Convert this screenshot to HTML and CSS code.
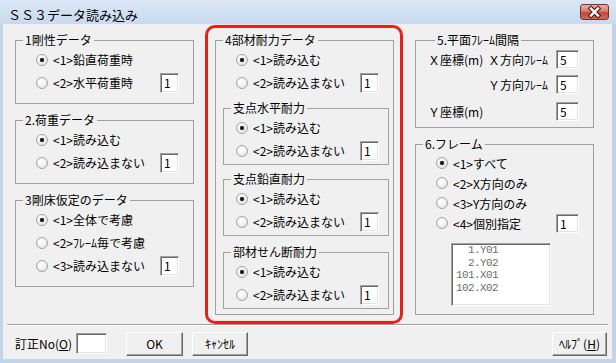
FILE: index.html
```html
<!DOCTYPE html>
<html lang="ja">
<head>
    <meta charset="UTF-8">
    <meta name="viewport" content="width=device-width, initial-scale=1.0">
    <title>ＳＳ３データ読み込み</title>
    <link rel="stylesheet" href="styles.css">
</head>
<body>

<div class="window">
    <div class="titlebar">
        <span class="title">ＳＳ３データ読み込み</span>
        <span class="close-btn">
            <svg width="27" height="14" viewBox="0 0 27 14">
                <path d="M10 3.5 L17 10.5 M17 3.5 L10 10.5" stroke="#5a1e19" stroke-width="4.6" stroke-linecap="square"/>
                <path d="M10 3.5 L17 10.5 M17 3.5 L10 10.5" stroke="#fff" stroke-width="2.4" stroke-linecap="square"/>
            </svg>
        </span>
    </div>

    <div class="client">
        <div class="panels">
            <!-- 左列 -->
            <div class="col">
                <fieldset class="group">
                    <legend>1剛性データ</legend>
                    <div class="row"><span class="radio on"></span>&lt;1&gt;鉛直荷重時</div>
                    <div class="row"><span class="radio"></span>&lt;2&gt;水平荷重時<span class="num">1</span></div>
                </fieldset>
                <fieldset class="group">
                    <legend>2.荷重データ</legend>
                    <div class="row"><span class="radio on"></span>&lt;1&gt;読み込む</div>
                    <div class="row"><span class="radio"></span>&lt;2&gt;読み込まない<span class="num">1</span></div>
                </fieldset>
                <fieldset class="group">
                    <legend>3剛床仮定のデータ</legend>
                    <div class="row"><span class="radio on"></span>&lt;1&gt;全体で考慮</div>
                    <div class="row"><span class="radio"></span>&lt;2&gt;ﾌﾚｰﾑ毎で考慮</div>
                    <div class="row"><span class="radio"></span>&lt;3&gt;読み込まない<span class="num">1</span></div>
                </fieldset>
            </div>

            <!-- 中央列 -->
            <div class="col">
                <fieldset class="group big">
                    <legend>4部材耐力データ</legend>
                    <div class="row"><span class="radio on"></span>&lt;1&gt;読み込む</div>
                    <div class="row"><span class="radio"></span>&lt;2&gt;読み込まない<span class="num">1</span></div>

                    <fieldset class="group sub">
                        <legend>支点水平耐力</legend>
                        <div class="row"><span class="radio on"></span>&lt;1&gt;読み込む</div>
                        <div class="row"><span class="radio"></span>&lt;2&gt;読み込まない<span class="num">1</span></div>
                    </fieldset>
                    <fieldset class="group sub">
                        <legend>支点鉛直耐力</legend>
                        <div class="row"><span class="radio on"></span>&lt;1&gt;読み込む</div>
                        <div class="row"><span class="radio"></span>&lt;2&gt;読み込まない<span class="num">1</span></div>
                    </fieldset>
                    <fieldset class="group sub last">
                        <legend>部材せん断耐力</legend>
                        <div class="row"><span class="radio on"></span>&lt;1&gt;読み込む</div>
                        <div class="row"><span class="radio"></span>&lt;2&gt;読み込まない<span class="num">1</span></div>
                    </fieldset>
                </fieldset>
            </div>

            <!-- 右列 -->
            <div class="col">
                <fieldset class="group spans">
                    <legend>5.平面ﾌﾚｰﾑ間隔</legend>
                    <div class="span-grid">
                        <span class="g-label">Ｘ座標(m)</span>
                        <span class="g-sub">Ｘ方向ﾌﾚｰﾑ</span>
                        <span class="num wide">5</span>
                        <span></span>
                        <span class="g-sub">Ｙ方向ﾌﾚｰﾑ</span>
                        <span class="num wide">5</span>
                        <span class="g-label">Ｙ座標(m)</span>
                        <span></span>
                        <span class="num wide">5</span>
                    </div>
                </fieldset>
                <fieldset class="group frames">
                    <legend>6.フレーム</legend>
                    <div class="row short"><span class="radio on"></span>&lt;1&gt;すべて</div>
                    <div class="row short"><span class="radio"></span>&lt;2&gt;X方向のみ</div>
                    <div class="row short"><span class="radio"></span>&lt;3&gt;Y方向のみ</div>
                    <div class="row short"><span class="radio"></span>&lt;4&gt;個別指定<span class="num wide">1</span></div>
                    <div class="listbox">  1.Y01
  2.Y02
101.X01
102.X02</div>
                </fieldset>
            </div>
        </div>

        <div class="separator"></div>

        <div class="footer">
            <span class="fix-label">訂正No(<u>O</u>)</span>
            <span class="num fix-input"></span>
            <span class="btn ok">OK</span>
            <span class="btn cancel">ｷｬﾝｾﾙ</span>
            <span class="btn help">ﾍﾙﾌﾟ(<u>H</u>)</span>
        </div>
    </div>

    <div class="highlight"></div>
</div>

</body>
</html>
```

FILE: styles.css
```css
/* ダイアログ全体 */
* {
    box-sizing: border-box;
}
body {
    margin: 0;
    font-family: "Noto Sans CJK JP", "Noto Sans", sans-serif;
    font-size: 12px;
    color: #000;
}
.window {
    position: relative;
    width: 616px;
    height: 363px;
    background: #c2d5eb;
    display: flex;
    flex-direction: column;
}
.titlebar {
    height: 24px;
    flex: none;
    display: flex;
    justify-content: space-between;
    align-items: flex-start;
    padding-left: 8px;
    background: linear-gradient(#dbe7f5, #c8daee);
}
.title {
    margin-top: 7px;
    font-size: 13px;
    line-height: 16px;
}
.close-btn {
    margin: 4px 7px 0 0;
    width: 29px;
    height: 16px;
    border: 1px solid #7a3029;
    border-radius: 3px;
    background: linear-gradient(#eab2a9, #d77a6e 45%, #c3473b 55%, #d0685c);
    display: flex;
    align-items: center;
    justify-content: center;
}
.client {
    flex: 1;
    margin: 0 4px 4px 3px;
    background: #f0f0f0;
    display: flex;
    flex-direction: column;
}
.panels {
    height: 300px;
    flex: none;
    display: flex;
    gap: 21px;
    padding: 9px 0 0 12px;
}
.col {
    width: 179px;
    display: flex;
    flex-direction: column;
    gap: 9px;
}

/* グループボックス */
.group {
    margin: 0;
    padding: 1px 0 9px;
    border: 1px solid #a0a0a0;
    min-width: 0;
}
.group legend {
    margin-left: 7px;
    padding: 0 2px;
    line-height: 14px;
}
.group.big {
    padding-bottom: 5px;
}
.group.sub {
    width: 166px;
    margin: 7px 0 0 7px;
    padding-bottom: 2px;
}
.group.sub.last {
    margin-top: 9px;
}
.group.spans {
    padding: 3px 14px 6px 12px;
}
.group.frames {
    padding: 2px 0 8px;
}

.row {
    display: flex;
    align-items: center;
    height: 23px;
    padding: 0 14px 0 20px;
    white-space: nowrap;
}
.sub .row {
    padding: 0 9px 0 12px;
}
.row.short {
    height: 20px;
}

/* ラジオボタン */
.radio {
    flex: none;
    width: 12px;
    height: 12px;
    margin-right: 5px;
    border-radius: 50%;
    border: 1px solid #a2a2a2;
    background: radial-gradient(circle at 40% 35%, #fff 0, #f3f3f3 45%, #d9d9d9 100%);
    display: flex;
    align-items: center;
    justify-content: center;
}
.radio.on::after {
    content: "";
    width: 4px;
    height: 4px;
    border-radius: 50%;
    background: #1a1a1a;
    box-shadow: 0 0 1px #444;
}

/* 数値入力欄 */
.num {
    margin-left: auto;
    width: 19px;
    height: 20px;
    flex: none;
    padding-left: 3px;
    border: 1px solid;
    border-color: #a0a0a0 #fff #fff #a0a0a0;
    box-shadow: inset 1px 1px #696969, inset -1px -1px #e3e3e3;
    background: #fff;
    line-height: 18px;
}
.num.wide {
    width: 23px;
    height: 19px;
    line-height: 17px;
}

.span-grid {
    display: grid;
    grid-template-columns: 60px 1fr 23px;
    grid-template-rows: 19px 19px 21px;
    row-gap: 6px;
    align-items: end;
}
.g-label, .g-sub {
    line-height: 19px;
    white-space: nowrap;
}
.g-sub {
    text-align: right;
    padding-right: 8px;
}

.listbox {
    width: 100px;
    height: 63px;
    margin: 10px 0 0 35px;
    padding: 0 0 0 4px;
    border: 1px solid;
    border-color: #a0a0a0 #fff #fff #a0a0a0;
    box-shadow: inset 1px 1px #696969, inset -1px -1px #e3e3e3;
    background: #fff;
    color: #6d6d6d;
    font-family: "Liberation Mono", monospace;
    font-size: 11px;
    letter-spacing: -0.6px;
    line-height: 12.5px;
    white-space: pre;
}

/* 下部ボタン */
.separator {
    height: 2px;
    margin: 0 4px;
    border-top: 1px solid #a0a0a0;
    border-bottom: 1px solid #fff;
}
.footer {
    flex: 1;
    display: flex;
    align-items: center;
    padding: 2px 5px 0 12px;
}
.fix-label {
    width: 61px;
    white-space: nowrap;
}
.fix-input {
    margin: 0 19px 0 0;
    width: 31px;
    height: 21px;
}
.btn {
    height: 24px;
    display: flex;
    align-items: center;
    justify-content: center;
    border: 1px solid;
    border-color: #fff #696969 #696969 #fff;
    box-shadow: inset -1px -1px #a0a0a0;
    background: #f0f0f0;
}
.btn.ok {
    width: 57px;
    margin-right: 9px;
}
.btn.cancel {
    width: 56px;
}
.btn.help {
    width: 55px;
    margin-left: auto;
}

/* 注目枠 */
.highlight {
    position: absolute;
    left: 205px;
    top: 25px;
    width: 198px;
    height: 299px;
    border: 3px solid #e3221e;
    border-radius: 10px;
    pointer-events: none;
}
```
